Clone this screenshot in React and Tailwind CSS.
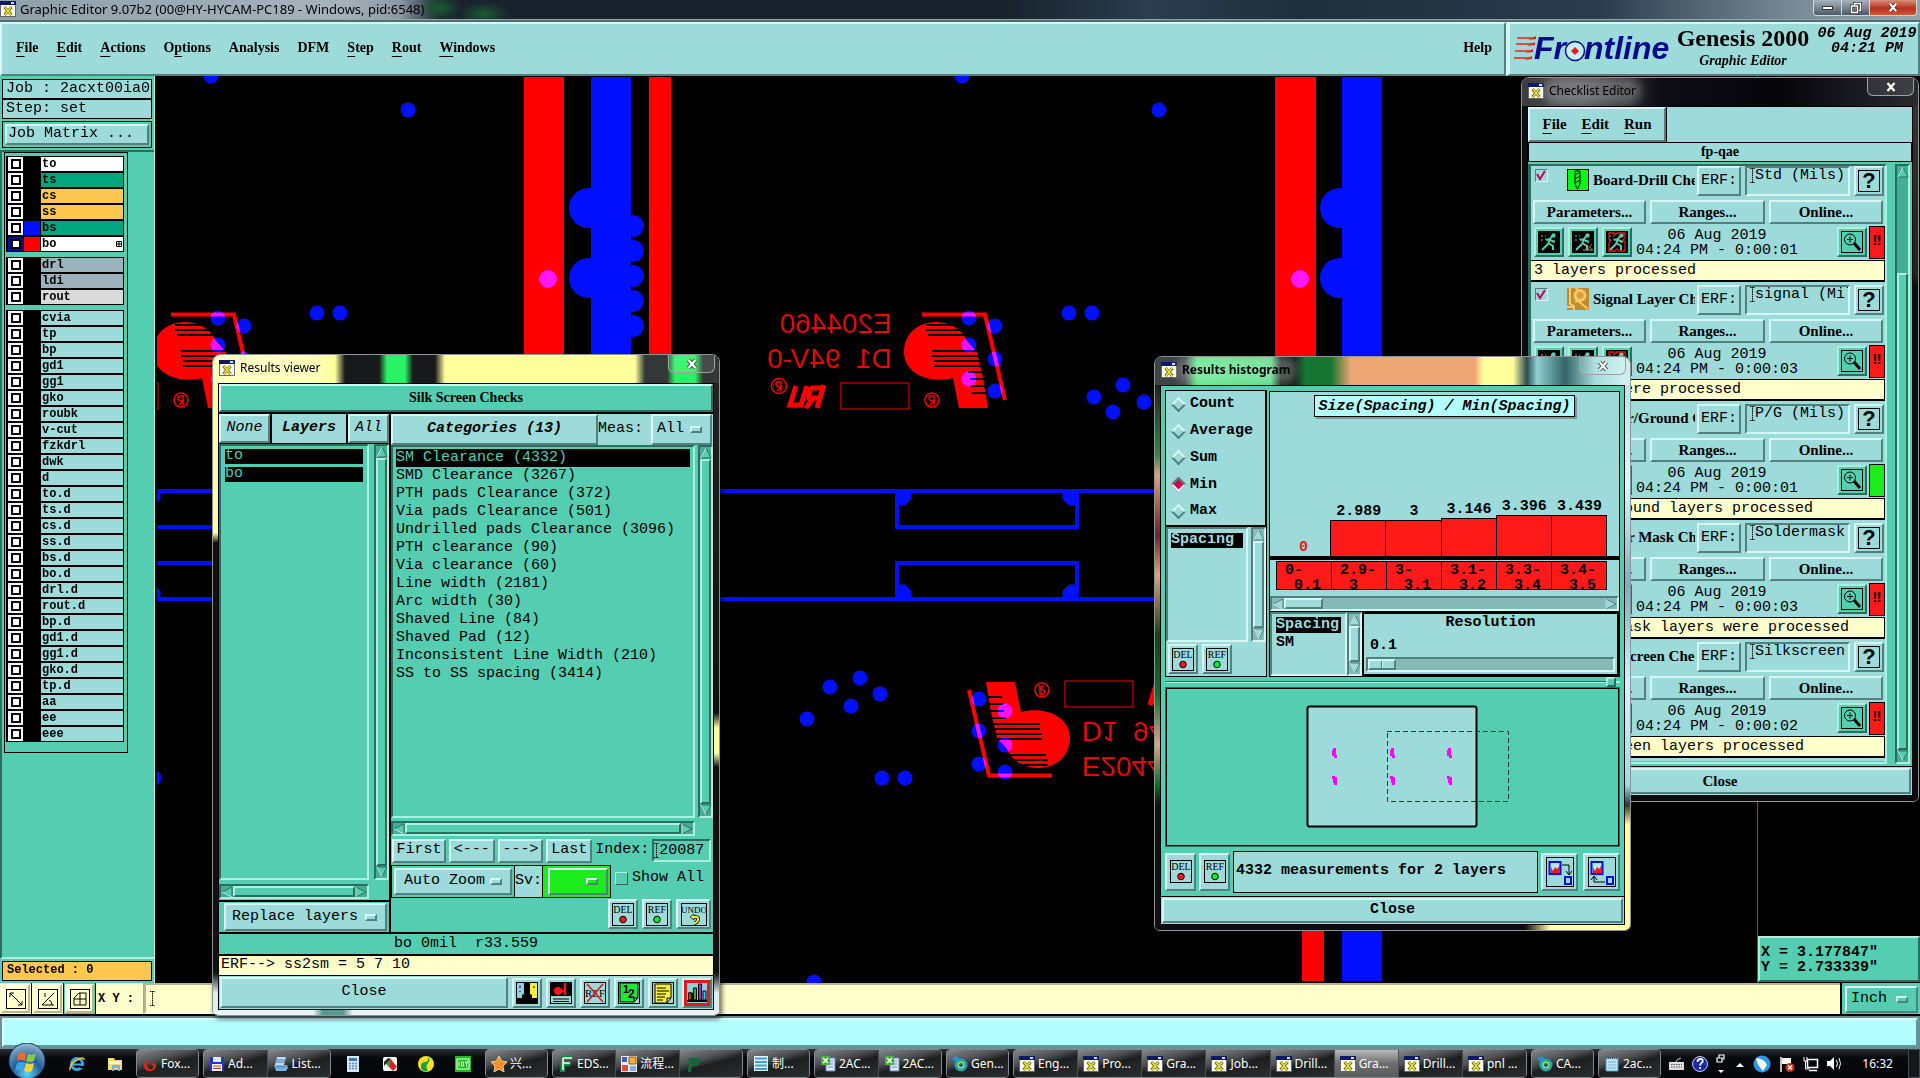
import React from "react";

const MONO = "font-['Liberation_Mono',monospace]";
const SERIF = "font-['Liberation_Serif',serif]";
const SANS = "font-['Noto_Sans','Noto_Sans_CJK_SC',sans-serif]";

/* Motif style bevels */
const RAISED = "border-2 border-t-[#d6f6f5] border-l-[#d6f6f5] border-b-[#51807f] border-r-[#51807f]";
const SUNKEN = "border-2 border-t-[#51807f] border-l-[#51807f] border-b-[#d6f6f5] border-r-[#d6f6f5]";
const G_RAISED = "border-2 border-t-[#a9f0de] border-l-[#a9f0de] border-b-[#2c6e5e] border-r-[#2c6e5e]";
const G_SUNKEN = "border-2 border-t-[#2c6e5e] border-l-[#2c6e5e] border-b-[#a9f0de] border-r-[#a9f0de]";

function Btn({ className = "", children, ...rest }) {
  return (
    <button type="button" className={`bg-[#9cdbda] flex items-center justify-center overflow-hidden whitespace-nowrap ${RAISED} ${className}`} {...rest}>
      {children}
    </button>
  );
}

function XIcon() {
  return (
    <svg className="size-4 shrink-0" viewBox="0 0 16 16">
      <rect x="0.5" y="0.5" width="15" height="15" fill="#fdfdf4" stroke="#666" />
      <rect x="0" y="0" width="16" height="4" fill="#10186b" />
      <rect x="11" y="1" width="3" height="2" fill="#ddd" />
      <path d="M4.500 6l7 8M11.500 6l-7 8" stroke="#6d6a10" strokeWidth="3" />
      <path d="M5 6l6 8M11 6l-6 8" stroke="#e8e23a" strokeWidth="1.500" />
    </svg>
  );
}

/* ---------- scroll bars ---------- */
function Arrow({ d, light }) {
  return (
    <svg className="size-3 shrink-0" viewBox="0 0 12 12">
      <path d={d} fill={light ? "#9cdbda" : "#55cdb0"} stroke={light ? "#51807f" : "#2c6e5e"} />
      <path d={d.split("L").slice(0, 2).join("L")} fill="none" stroke="#d6f6f5" />
    </svg>
  );
}
function VBar({ light = false, start = "0%", className = "" }) {
  return (
    <div className={`w-[15px] shrink-0 flex flex-col items-center ${light ? `bg-[#84b9b8] ${SUNKEN}` : `bg-[#44ad95] ${G_SUNKEN}`} ${className}`}>
      <Arrow light={light} d="M1 11L6 1L11 11Z" />
      <div className="shrink-0" style={{ height: start }} />
      <div className={`w-full flex-1 ${light ? `bg-[#9cdbda] ${RAISED}` : `bg-[#55cdb0] ${G_RAISED}`}`} />
      <Arrow light={light} d="M6 11L1 1L11 1Z" />
    </div>
  );
}
function HBar({ light = false, size = "100%", className = "" }) {
  return (
    <div className={`h-[15px] shrink-0 flex items-center ${light ? `bg-[#84b9b8] ${SUNKEN}` : `bg-[#44ad95] ${G_SUNKEN}`} ${className}`}>
      <Arrow light={light} d="M11 11L1 6L11 1Z" />
      <div className="flex-1 h-full flex">
        <div className={`h-full ${light ? `bg-[#9cdbda] ${RAISED}` : `bg-[#55cdb0] ${G_RAISED}`}`} style={{ width: size }} />
      </div>
      <Arrow light={light} d="M1 11L1 1L11 6Z" />
    </div>
  );
}

/* ---------- icon buttons ---------- */
function TagIcon({ label }) {
  const w = label === "UNDO" ? 26 : 22;
  return (
    <svg width={w} height="23" viewBox={`0 0 ${w} 23`} className="shrink-0">
      <rect x="0.500" y="0.500" width={w - 1} height="22" fill="none" stroke="#000" />
      <text x={w / 2} y="10" textAnchor="middle" fontFamily="Liberation Serif" fontWeight="normal" fontSize={label === "UNDO" ? 9 : 10}>{label}</text>
      {label === "UNDO" ? (
        <g fill="none">
          <path d="M11 14h4q3 0 2 3q-1 3-4 3" stroke="#000" strokeWidth="3.500" />
          <path d="M9 14l4-3v6z" fill="#f4ee3c" stroke="#000" strokeWidth="0.700" />
          <path d="M11 14h4q3 0 2 3q-1 3-4 3" stroke="#f4ee3c" strokeWidth="2" />
        </g>
      ) : (
        <circle cx={w / 2} cy="16.500" r="3.300" fill={label === "DEL" ? "#f01818" : "#18e828"} stroke="#000" />
      )}
    </svg>
  );
}
function TagBtn({ label }) {
  return (
    <Btn aria-label={label} className={label === "UNDO" ? "w-[35px] h-[30px] shrink-0" : "w-[30px] h-[30px] shrink-0"}>
      <TagIcon label={label} />
    </Btn>
  );
}

const FOOT_ICONS = [
  ["Contrast", <g key="a"><rect width="22" height="22" fill="#8fd0dc" /><rect x="12" width="10" height="22" fill="#f7f136" /><path d="M8 0h6v12l2 1v3h6v6H0v-6h6v-3l2-1z" fill="#000" /><path d="M4 4v2M4 9v1M18 4v2" stroke="#000" /></g>],
  ["Snapshot", <g key="b"><rect width="22" height="14" fill="#000" /><circle cx="8" cy="9" r="4" fill="#f01818" /><path d="M8 9h6M15 1v12" stroke="#f01818" strokeWidth="2.500" /><path d="M3 17h16M3 19.500h16" stroke="#000" strokeWidth="1.200" /></g>],
  ["Clear reference", <g key="c"><text x="11" y="15" textAnchor="middle" fontFamily="Liberation Serif" fontSize="11">REF</text><path d="M3 2L19 20M19 2L3 20" stroke="#d8232a" strokeWidth="1.800" /></g>],
  ["Page numbers", <g key="d"><path d="M2 1h18v15l-4 4H2z" fill="#22e53a" stroke="#000" /><path d="M16 20v-4h4" fill="none" stroke="#000" /><text x="5" y="11" fontFamily="Liberation Sans" fontWeight="bold" fontSize="11">1</text><text x="10" y="16" fontFamily="Liberation Sans" fontWeight="bold" fontSize="12">2</text></g>],
  ["Notes", <g key="e"><path d="M3 2h16v14l-4 5H3z" fill="#f7f136" stroke="#000" /><path d="M5 6h9M5 9h12M5 12h9M5 15h8M5 18h6M15 21v-5h4" stroke="#000" fill="none" /></g>],
  ["Histogram", <g key="f"><rect width="22" height="22" fill="#8fd0dc" /><path d="M2.500 18v-7h4v7zM7.500 18V6h3v12z" fill="#22b53a" stroke="#000" /><path d="M2.500 18v-7h3v7z" fill="#e22" stroke="#000" /><path d="M12.500 18V2h3v16z" fill="#b030c0" stroke="#000" /><path d="M17 18v-9h3v9z" fill="#40c8e8" stroke="#000" /><path d="M1 19h20" stroke="#000" strokeWidth="2" /></g>],
];

/* ---------- desktop window ---------- */
function Win({ title, className, bar, left, right, bottom, children }) {
  return (
    <section aria-label={title} className={`absolute flex flex-col rounded-t-lg rounded-b-md border border-[#8d9494] overflow-hidden ${className}`}>
      <header className={`h-7 shrink-0 flex items-center pl-[6px] pb-[2px] gap-[5px] ${bar}`}>
        <XIcon />
        <h2 className={`${SANS} text-xs text-black leading-4 rounded-full bg-white/25 shadow-[0_0_8px_6px_rgba(255,255,255,0.25)]`}>{title}</h2>
        <button type="button" aria-label={`Close ${title}`} className="ml-auto mr-1 self-start w-[47px] h-[18px] flex items-center justify-center rounded-b-md border border-t-0 border-[#9aa3a3] bg-white/10">
          <svg className="w-3 h-3" viewBox="0 0 12 12"><path d="M2.500 2l7 8M9.500 2l-7 8" stroke="#333" strokeWidth="4" /><path d="M2.500 2l7 8M9.500 2l-7 8" stroke="#fff" strokeWidth="2.400" /></svg>
        </button>
      </header>
      <div className="flex-1 min-h-0 flex">
        <div className={`w-[5px] shrink-0 ${left}`} />
        <div className="flex-1 min-w-0 border border-black flex flex-col">{children}</div>
        <div className={`w-[5px] shrink-0 ${right}`} />
      </div>
      <div className={`h-[5px] shrink-0 ${bottom}`} />
    </section>
  );
}

/* ---------- layer list ---------- */
const LAYERS = [
  [["to", "w"], ["ts", "g"], ["cs", "o"], ["ss", "o"], ["bs", "g", "blue"], ["bo", "w", "red"]],
  [["drl", "s"], ["ldi", "s"], ["rout", "l"]],
  "cvia tp bp gd1 gg1 gko roubk v-cut fzkdrl dwk d to.d ts.d cs.d ss.d bs.d bo.d drl.d rout.d bp.d gd1.d gg1.d gko.d tp.d aa ee eee".split(" ").map((n) => [n, "t"]),
];
const LAYER_BG = { w: "bg-white", g: "bg-[#00a67e]", o: "bg-[#ffc74d]", s: "bg-[#9cb3bd]", l: "bg-[#dadada]", t: "bg-[#9cdbda]" };
const SWATCH = { blue: "bg-[#0010ff]", red: "bg-[#ff0000]" };

function LayerRow({ name, tone, swatch }) {
  const active = name === "bo";
  return (
    <label className="h-4 pt-px pb-px pl-[2px] pr-px flex gap-px bg-black">
      <span className={`w-[15px] h-[14px] flex items-center justify-center ${active ? "bg-[#00108c]" : "bg-white"}`}>
        <input type="checkbox" aria-label={name} className="appearance-none block size-[10px] border-2 border-black bg-white" />
      </span>
      <span className={`w-4 ${swatch ? SWATCH[swatch] : ""}`} />
      <span className={`flex-1 flex items-center pl-px ${MONO} font-bold text-xs leading-[14px] text-black ${LAYER_BG[tone]}`}>
        {name}
        {active && (
          <svg className="ml-auto mr-px size-[6px]" viewBox="0 0 6 6"><path d="M.5.5h5v5h-5zM3 .5v5M.5 3h5" fill="none" stroke="#000" /></svg>
        )}
      </span>
    </label>
  );
}

function LeftPanel() {
  return (
    <aside className={`w-[155px] shrink-0 flex flex-col bg-[#55cdb0] border-r border-[#a9f0de] ${MONO} text-[15px]`}>
      <div className="mx-[2px] mt-[3px] border border-black bg-[#9cdbda]">
        <div className="h-5 leading-[18px] border-b-2 border-black pl-[3px] whitespace-nowrap">Job : 2acxt00ia0</div>
        <div className="h-[18px] leading-[18px] pl-[3px] whitespace-nowrap">Step: set</div>
      </div>
      <div className="mx-[2px] mt-[2px] h-[27px] p-[2px] border border-black flex">
        <Btn className="flex-1 justify-start pl-px">Job Matrix ...</Btn>
      </div>
      <div className="flex-1 mt-[2px] border-t-2 border-l-2 border-t-[#2c6e5e] border-l-[#2c6e5e] border-b-2 border-b-[#a9f0de] flex flex-col">
        <div className="w-[124px] ml-[2px] pt-[3px] pl-px pr-[3px] pb-[10px] border border-black flex flex-col gap-[5px]">
          {LAYERS.map((group, i) => (
            <div key={i}>
              {group.map(([n, t, s]) => <LayerRow key={n} name={n} tone={t} swatch={s} />)}
            </div>
          ))}
        </div>
      </div>
      <div className="m-[2px] h-5 pl-1 border border-black bg-[#ffc74d] font-bold text-[12px] leading-[17px]">Selected : 0</div>
    </aside>
  );
}

/* ---------- board drawing ---------- */
function LogoMark({ caption = true }) {
  return (
    <g>
      {caption && (
        <g fill="#e80808" stroke="none" fontFamily="Liberation Sans" fontSize="28">
          <text transform="translate(892 333) scale(-1 1)">E204460</text>
          <text transform="translate(892 368) scale(-1 1)" xmlSpace="preserve" style={{ whiteSpace: "pre" }}>D1  94V-0</text>
        </g>
      )}
      <rect x="841" y="383" width="68" height="26" fill="none" stroke="#f00" />
      <g fill="none" stroke="#f00" strokeWidth="1.500">
        <circle cx="932" cy="400" r="7" />
        <path d="M934 405v-9q-5-1-5 2t5 3l-4 4" />
        <circle cx="779" cy="386" r="7.500" />
        <path d="M781 391v-9q-5-1-5 2t5 3l-4 4" />
      </g>
      <g fill="none" stroke="#f00" strokeWidth="5">
        <path d="M796 386L790 405H801L807 386" />
        <path d="M824 385L817 408M822 388H812Q810 389 809 395T812 398H820M814 397L806 408" />
      </g>
      <path d="M922 314.500H985L1005 400" fill="none" stroke="#f00" strokeWidth="4" />
      <path d="M904 352C904 334 918 322 936 322C952 322 963 331 967 341L977 352L983 378L988 408H959L953 378C930 384 904 374 904 352Z" fill="#f00" />
      <path d="M926 325h34M926 330h40M928 335h40M932 351h50M932 356h50M934 361h50M934 366h52M968 372h22M970 379h22M971 386h22M972 393h20" stroke="#000" strokeWidth="2" />
      <g fill="#0010ff" style={{ mixBlendMode: "screen" }}>
        {[[969, 318], [995, 326], [969, 345], [995, 359], [969, 379], [995, 391]].map(([x, y]) => <circle key={`${x}-${y}`} cx={x} cy={y} r="7.500" />)}
      </g>
    </g>
  );
}

const DOTS = [[211, 76], [408, 110], [317, 313], [340, 313], [962, 76], [1159, 110], [1069, 313], [1092, 313], [1123, 385], [1094, 397], [1113, 412], [1144, 402], [807, 719], [830, 687], [860, 678], [851, 706], [880, 694], [882, 778], [905, 778], [814, 982], [154, 778]];

function Board() {
  return (
    <main className="flex-1 min-w-0 bg-black overflow-hidden">
      <svg className="block w-full h-full" role="img" aria-label="Board view">
        <svg x="2" width="100%" height="100%">
        <g transform="translate(-157 -76)">
          <g fill="#f00"><path d="M524 77h40v400h-40zM649 77h22v400h-22zM1275 77h41v400h-41zM1302 800h22v181h-22z" /></g>
          <g fill="#0010ff">
            <path d="M591 77h40v400h-40zM1342 77h40v904h-40z" />
            {[589, 1340].map((x) => <g key={x}><circle cx={x} cy="208" r="20" /><circle cx={x} cy="278" r="20" /></g>)}
            {[226, 251, 276, 301, 326].map((y) => <circle key={y} cx="633" cy={y} r="11" />)}
            {DOTS.map(([x, y]) => <circle key={`${x}-${y}`} cx={x} cy={y} r="7.500" />)}
          </g>
          <g fill="#ff18ff"><circle cx="548" cy="279" r="9" /><circle cx="1300" cy="279" r="9" /></g>
          <g stroke="#0010ff" strokeWidth="4" fill="none">
            <path d="M100 491H1400M100 599H1400" />
            {[0, 751].map((dx) => (
              <g key={dx} transform={`translate(${dx} 0)`}>
                <path d="M146 491V527H326V491M146 599V563H326V599" />
                <path d="M146 491h14v8l-6 6h-8zM326 491h-14v8l6 6h8zM146 599h14v-8l-6-6h-8zM326 599h-14v-8l6-6h8z" fill="#0010ff" strokeWidth="1" />
              </g>
            ))}
          </g>
          <LogoMark />
          <g transform="translate(-751 0)"><LogoMark caption={false} /></g>
          <g transform="rotate(180 987 545)"><LogoMark /></g>
        </g>
        </svg>
      </svg>
    </main>
  );
}

/* ---------- results viewer ---------- */
const CATEGORIES = ["SM Clearance (4332)", "SMD Clearance (3267)", "PTH pads Clearance (372)", "Via pads Clearance (501)", "Undrilled pads Clearance (3096)", "PTH clearance (90)", "Via clearance (60)", "Line width (2181)", "Arc width (30)", "Shaved Line (84)", "Shaved Pad (12)", "Inconsistent Line Width (210)", "SS to SS spacing (3414)"];

function Drop({ label, value, className = "", tone = "", pad = "pl-2" }) {
  return (
    <label className={`flex items-center pr-2 ${tone || "bg-[#9cdbda]"} ${RAISED} ${className}`}>
      <select aria-label={label} className={`appearance-none flex-1 min-w-0 bg-transparent text-black outline-none ${pad}`}>
        <option>{value}</option>
      </select>
      <span className={`w-3 h-[7px] shrink-0 ${RAISED}`} />
    </label>
  );
}

function IBeam() {
  return <svg className="w-[5px] h-[15px] shrink-0" viewBox="0 0 5 15"><path d="M0 .5h5M2.500 0v15M0 14.500h5" stroke="#000" strokeDasharray="1.500 0.700" /></svg>;
}

function ResultsViewer() {
  return (
    <Win
      title="Results viewer"
      className={`left-[212px] top-[354px] w-[508px] h-[662px] shadow-[2px_3px_5px_rgba(0,0,0,0.6)] ${MONO} text-[15px]`}
      bar="bg-[linear-gradient(90deg,#ffffc0_0px,#ffff9c_122px,#17191a_132px,#17191a_166px,#2bf264_174px,#2bf264_192px,#17191a_200px,#17191a_222px,#ffff9c_232px,#ffff9c_422px,#333738_432px,#333738_454px,#2bf264_462px,#2bf264_482px,#333738_490px)]"
      left="bg-[linear-gradient(180deg,#ffff9c_0px,#ffff9c_150px,#111_160px,#111_590px,#dcefee_610px)]"
      right="bg-[linear-gradient(180deg,#222_0px,#111_330px,#ffffa0_345px,#ffffa0_370px,#111_384px,#111_590px,#dcefee_610px)]"
      bottom="bg-[linear-gradient(90deg,#e4f6f5_0px,#e4f6f5_100px,#5e9490_110px,#5e9490_130px,#e4f6f5_140px)]"
    >
      <h3 className={`h-7 shrink-0 bg-[#55cdb0] flex items-center justify-center ${SERIF} font-bold text-sm border-2 border-t-[#d6f6f5] border-l-[#d6f6f5] border-b-[#2c6e5e] border-r-[#2c6e5e]`}>Silk Screen Checks</h3>
      <div className="flex-1 min-h-0 flex bg-[#55cdb0] border-t-2 border-black">
        <div className="w-[172px] shrink-0 flex flex-col border-r-2 border-black">
          <div className="h-[30px] flex border-b border-black italic bg-[#9cdbda]">
            <Btn className="w-[51px] italic">None</Btn>
            <div className="flex-1 border-x-2 border-black font-bold flex items-center justify-center">Layers</div>
            <Btn className="w-[41px] italic">All</Btn>
          </div>
          <div className="flex-1 min-h-0 flex justify-between">
            <ul role="listbox" aria-label="Layers" className={`w-[150px] pt-[3px] px-1 flex flex-col gap-[3px] ${G_SUNKEN}`}>
              {["to", "bo"].map((n) => (
                <li key={n} role="option" aria-selected="true" className="h-[15px] leading-[14px] bg-black text-[#55cdb0]">{n}</li>
              ))}
            </ul>
            <VBar />
          </div>
          <HBar className="w-[150px] mt-1 mb-px" />
          <div className="h-8 flex p-px border-t-2 border-black">
            <Drop label="Layer mode" value="Replace layers" className="flex-1 ml-1 mr-px" pad="pl-[6px]" />
          </div>
        </div>
        <div className="flex-1 min-w-0 flex flex-col">
          <div className="h-[31px] flex bg-[#9cdbda]">
            <h4 className={`w-[207px] flex items-center justify-center italic font-bold ${RAISED}`}>Categories (13)</h4>
            <span className="flex-1 flex items-center">Meas:</span>
            <Drop label="Measurement filter" value="All" className="w-[61px] mr-px" pad="pl-1" />
          </div>
          <div className="flex-1 min-h-0 flex justify-between">
            <ul role="listbox" aria-label="Categories" className={`w-[304px] pt-[2px] pl-[3px] pr-[3px] ${G_SUNKEN}`}>
              {CATEGORIES.map((c, i) => (
                <li key={c} role="option" aria-selected={i === 0} className={`h-[18px] leading-[18px] whitespace-pre ${i === 0 ? "bg-black text-[#55cdb0] " : "text-black"}`}>{c}</li>
              ))}
            </ul>
            <VBar />
          </div>
          <HBar className="w-[304px] mt-[3px]" />
          <div className="h-7 pt-px pl-px pr-[2px] flex items-center gap-[3px]">
            <Btn className="h-6 w-[54px]">First</Btn>
            <Btn className="h-6 w-[46px]">&lt;---</Btn>
            <Btn className="h-6 w-[46px]">---&gt;</Btn>
            <Btn className="h-6 w-[46px]">Last</Btn>
            <label htmlFor="idx" className="flex-1 whitespace-nowrap">Index:</label>
            <div className={`w-[59px] h-[23px] flex items-center ${G_SUNKEN}`}>
              <IBeam /><input id="idx" defaultValue="20087" className="w-full min-w-0 bg-transparent outline-none leading-4" />
            </div>
          </div>
          <div className="h-[34px] flex items-center">
            <div className="h-[33px] w-[124px] p-[2px] flex border border-black"><Drop label="Zoom mode" value="Auto Zoom" className="flex-1" /></div>
            <div className="h-[33px] w-[27px] flex items-center bg-[#9cdbda] border-y border-black">Sv:</div>
            <div className="h-[33px] w-[69px] p-[2px] pl-[5px] flex border border-black bg-[#1ceb1c]">
              <Drop label="Severity" value="" tone="bg-[#1ceb1c]" className="flex-1" />
            </div>
            <label className="flex-1 flex gap-1 pl-1 pb-[6px] items-center whitespace-nowrap">
              <input type="checkbox" className={`appearance-none size-[13px] border border-t-[#a9f0de] border-l-[#a9f0de] border-b-[#2c6e5e] border-r-[#2c6e5e]`} />
              Show All
            </label>
          </div>
          <div className="h-[34px] pr-[2px] flex justify-end items-start gap-1 pt-px">
            <TagBtn label="DEL" /><TagBtn label="REF" /><TagBtn label="UNDO" />
          </div>
        </div>
      </div>
      <p className="h-[22px] shrink-0 bg-[#55cdb0] border-t-2 border-black text-center whitespace-pre leading-[20px]">bo 0mil  r33.559</p>
      <p className="h-[22px] shrink-0 bg-[#ffffcc] border-y-2 border-b border-black pl-[2px] leading-[18px]">ERF--&gt; ss2sm = 5 7 10</p>
      <div className="h-[33px] shrink-0 bg-[#9cdbda] flex items-center gap-1 px-px">
        <Btn className="flex-1 h-[31px]">Close</Btn>
        {FOOT_ICONS.map(([n, g]) => (
          <Btn key={n} aria-label={n} className={`w-[30px] h-[30px] shrink-0 ${n === "Histogram" ? "outline-2 -outline-offset-4 outline-[#e81818]" : ""}`}>
            <svg width="22" height="22" viewBox="0 0 22 22" className="shrink-0">{g}<rect x="0.500" y="0.500" width="21" height="21" fill="none" stroke={n === "Histogram" ? "#d81c20" : "#000"} /></svg>
          </Btn>
        ))}
      </div>
    </Win>
  );
}

/* ---------- histogram ---------- */
const BARS = [
  { v: "0", h: 0, a: "0-", b: "0.1" },
  { v: "2.989", h: 36, a: "2.9-", b: "3" },
  { v: "3", h: 36, a: "3-", b: "3.1" },
  { v: "3.146", h: 38, a: "3.1-", b: "3.2" },
  { v: "3.396", h: 41, a: "3.3-", b: "3.4" },
  { v: "3.439", h: 41, a: "3.4-", b: "3.5" },
];

function Histogram() {
  return (
    <Win
      title="Results histogram"
      className={`left-[1154px] top-[356px] w-[477px] h-[575px] ${MONO} text-[15px] font-bold`}
      bar="bg-[linear-gradient(90deg,#3c4446_0px,#3c4446_30px,#55e484_42px,#55d880_116px,#15201a_126px,#15201a_140px,#167634_150px,#16762e_176px,#eea674_196px,#eea674_320px,#ffff9c_328px,#ffff9c_358px,#2a4a50_372px,#8fd0d2_382px,#356568_410px,#a5dcdc_440px,#cfeeee_470px)]"
      left="bg-[linear-gradient(180deg,#222_0px,#2c8a4a_70px,#e6a070_90px,#702030_150px,#e8a070_190px,#16401f_250px,#107030_310px,#e6a080_360px,#106a2c_400px,#111_420px)]"
      right="bg-[linear-gradient(180deg,#b0e8f0_0px,#d6fbff_100px,#7ab0b8_200px,#d0f6fa_300px,#9adce2_400px,#303838_420px,#ffffa0_440px)]"
      bottom="bg-[linear-gradient(90deg,#0a0a10_0px,#0a0a10_370px,#ffffa0_395px)]"
    >
      <div className="flex-1 min-h-0 flex flex-col bg-[#55cdb0] px-1 pt-1">
        <div className="h-[287px] shrink-0 flex gap-[2px]">
          <div className="w-[102px] shrink-0 flex flex-col bg-[#9cdbda] border border-black">
            <div role="radiogroup" aria-label="Statistic" className="h-[136px] flex flex-col border-b-2 border-r border-black pl-[7px]">
              {["Count", "Average", "Sum", "Min", "Max"].map((n) => (
                <label key={n} className="h-[27px] flex items-center gap-[6px]">
                  <input type="radio" name="stat" defaultChecked={n === "Min"} className="appearance-none rotate-45 size-[11px] border-2 border-t-[#d6f6f5] border-l-[#d6f6f5] border-b-[#51807f] border-r-[#51807f] checked:border-t-[#51807f] checked:border-l-[#51807f] checked:border-b-[#d6f6f5] checked:border-r-[#d6f6f5] checked:bg-[#d0004c]" />
                  {n}
                </label>
              ))}
            </div>
            <div className="h-[115px] flex justify-between">
              <ul role="listbox" aria-label="Measured value" className={`w-[82px] pt-[4px] px-[3px] ${SUNKEN}`}>
                <li role="option" aria-selected="true" className="h-[15px] leading-[14px] w-[72px] bg-black text-[#9cdbda]">Spacing</li>
              </ul>
              <VBar light />
            </div>
            <div className="flex-1 flex items-center gap-1 pl-[2px]"><TagBtn label="DEL" /><TagBtn label="REF" /></div>
          </div>
          <div className="flex-1 min-w-0 flex flex-col bg-[#9cdbda] border border-black mt-px">
            <div className="h-[204px] shrink-0 flex flex-col">
              <h3 className="self-center mt-[3px] px-[3px] h-[22px] leading-[22px] italic bg-[#b3ffff] border border-black shadow-[2px_2px_0_#7d9a9a]">Size(Spacing) / Min(Spacing)</h3>
              <div className="flex-1 flex items-end border-b-4 border-black pl-[6px] pr-3">
                {BARS.map((b, i) => (
                  <div key={b.a} className="flex-1 flex flex-col items-stretch">
                    <span className={`text-center leading-4 ${i === 0 ? "text-[#f01818]" : "text-black"}`}>{b.v}</span>
                    <div className={b.h ? "bg-[#ff1a1a] border border-b-0 border-black -ml-px" : ""} style={{ height: b.h }} />
                  </div>
                ))}
              </div>
              <div className="h-[29px] mt-px flex pl-[6px] pr-3 mb-[6px]">
                {BARS.map((b, i) => (
                  <div key={b.a} className={`flex-1 bg-[#ff1a1a] border border-black overflow-hidden leading-[15px] pl-2 pt-px whitespace-pre ${i ? "-ml-px" : ""}`}>
                    {b.a}<br />{" " + b.b}
                  </div>
                ))}
              </div>
            </div>
            <HBar light size="12%" />
            <div className="flex-1 min-h-0 flex border-t border-black">
              <ul role="listbox" aria-label="Axis" className={`w-[77px] pt-[3px] pl-1 pr-1 ${SUNKEN}`}>
                <li role="option" aria-selected="true" className="h-[16px] leading-[15px] bg-black text-[#9cdbda]">Spacing</li>
                <li role="option" aria-selected="false" className="h-[18px] leading-[20px]">SM</li>
              </ul>
              <VBar light />
              <label className="flex-1 flex flex-col px-[2px] pb-[2px] border-2 border-black justify-between">
                <span className="text-center leading-[18px]">Resolution</span>
                <span className="pl-1 pt-[3px] leading-4">0.1</span>
                <input type="range" min="0" max="10" defaultValue="0" className={`appearance-none w-full h-[15px] bg-[#84b9b8] ${SUNKEN} [&::-webkit-slider-thumb]:appearance-none [&::-webkit-slider-thumb]:w-7 [&::-webkit-slider-thumb]:h-[11px] [&::-webkit-slider-thumb]:bg-[linear-gradient(90deg,#9cdbda_11px,#51807f_11px,#51807f_12px,#d6f6f5_12px,#d6f6f5_13px,#9cdbda_13px)] [&::-webkit-slider-thumb]:border-2 [&::-webkit-slider-thumb]:border-t-[#d6f6f5] [&::-webkit-slider-thumb]:border-l-[#d6f6f5] [&::-webkit-slider-thumb]:border-b-[#51807f] [&::-webkit-slider-thumb]:border-r-[#51807f]`} />
              </label>
            </div>
          </div>
        </div>
        <div className="h-[10px] shrink-0 flex items-center">
          <div className="flex-1 h-[2px] bg-[#a9f0de] border-t border-[#2c6e5e]" />
          <span className={`size-[10px] bg-[#55cdb0] ${G_RAISED}`} />
          <div className="w-1 h-[2px] bg-[#a9f0de]" />
        </div>
        <div className="flex-1 min-h-0 flex items-center justify-center border-2 border-[#2c6e5e] outline-1 -outline-offset-2 outline-black">
          <svg width="204" height="124" viewBox="1305 706 204 124" className="ml-7" role="img" aria-label="Measurement map">
            <rect x="1307.500" y="707.500" width="169" height="120" rx="2" fill="#9cdbda" stroke="#000" strokeWidth="2" />
            <path d="M1387 732.500H1508.500V802.500H1387.500V732.500" fill="none" stroke="#333" strokeDasharray="5 3" />
            <g fill="#f0f">
              {[1334, 1392, 1449].map((x) => <g key={x}><path d={`M${x - 1} 749h3v7h1v3h-3v-2h-2v-6h1z`} /><path d={`M${x - 2} 777h3v1h2v8h-3v-2h-1v-4h-1z`} /></g>)}
            </g>
          </svg>
        </div>
        <div className="h-[49px] shrink-0 flex items-center gap-[3px]">
          <Btn aria-label="Delete" className="w-[31px] h-[38px] shrink-0"><TagIcon label="DEL" /></Btn>
          <Btn aria-label="Reference" className="w-[31px] h-[38px] shrink-0"><TagIcon label="REF" /></Btn>
          <p className="flex-1 h-[42px] px-[2px] flex items-center bg-[#9cdbda] border border-black whitespace-nowrap">4332 measurements for 2 layers</p>
          <Btn aria-label="Copy to layer" className="w-[37px] h-[38px] shrink-0">
            <svg width="28" height="30" viewBox="0 0 28 30"><rect x=".5" y=".5" width="27" height="29" fill="none" stroke="#000" /><rect x="3.500" y="5" width="11" height="12" fill="#b8e8f8" stroke="#0010e0" strokeWidth="2" /><path d="M5 16V10l2 4 2-4 2 2 3-4v8z" fill="#f01818" /><rect x="19" y="20" width="6" height="7" fill="none" stroke="#0010e0" strokeWidth="2" /><path d="M16 8h7v9M20 14l3 4 3-4" fill="none" stroke="#000" /></svg>
          </Btn>
          <Btn aria-label="Copy from layer" className="w-[37px] h-[38px] shrink-0 ml-[2px]">
            <svg width="28" height="30" viewBox="0 0 28 30"><rect x=".5" y=".5" width="27" height="29" fill="none" stroke="#000" /><rect x="3.500" y="5" width="11" height="12" fill="#b8e8f8" stroke="#0010e0" strokeWidth="2" /><path d="M5 16V10l2 4 2-4 2 2 3-4v8z" fill="#f01818" /><rect x="19" y="20" width="6" height="7" fill="none" stroke="#0010e0" strokeWidth="2" /><path d="M17 25H6v-5M3 23l3-4 3 4" fill="none" stroke="#000" /></svg>
          </Btn>
        </div>
      </div>
      <div className="h-7 shrink-0 p-px flex bg-[#9cdbda] border-t border-black"><Btn className="flex-1 font-bold">Close</Btn></div>
    </Win>
  );
}

/* ---------- checklist ---------- */
const CHECKS = [
  { n: "Board-Drill Checks", e: "Std (Mils)", t: "0:00:01", m: "3 layers processed", ok: false, icon: "drill" },
  { n: "Signal Layer Checks", e: "signal (Mils)", t: "0:00:03", m: "6 layers were processed", ok: false, icon: "signal" },
  { n: "Power/Ground Checks", e: "P/G (Mils)", t: "0:00:01", m: "2 power/ground layers processed", ok: true, icon: "signal" },
  { n: "Solder Mask Checks", e: "Soldermask", t: "0:00:03", m: "2 solder mask layers were processed", ok: false, icon: "drill" },
  { n: "Silk Screen Checks", e: "Silkscreen", t: "0:00:02", m: "2 silk screen layers processed", ok: false, icon: "drill" },
];

function RunIcon({ kind }) {
  return (
    <svg width="22" height="22" viewBox="0 0 22 22" className="shrink-0 bg-black">
      <g fill="none" stroke="#55cdb0" strokeWidth="2">
        <path d="M15 4l-3 4-2 5M10 13l-6 6M10 12l5 3v4M12 8l-4 1M12 9l5 2" />
        <path d="M14 3h3v3h-3z" fill="#55cdb0" strokeWidth="1" />
        <path d="M3 5h2M7 5h1M3 9h2M7 8h1" strokeWidth="1" />
      </g>
      {kind === 1 && <path d="M15 14l5 4M20 13l-4 5" stroke="#e8303a" />}
      {kind === 1 && <path d="M11 19h10" stroke="#55cdb0" />}
      {kind === 2 && <path d="M3 2h5l1 2 2-2h8v5l-2 2 2 2v9h-6l-2-2-2 2H3v-8l2-2-2-2z" fill="none" stroke="#e81818" strokeWidth="1.300" />}
    </svg>
  );
}

function CheckItem({ c }) {
  return (
    <li className="h-[119px] shrink-0 flex flex-col bg-[#9cdbda]">
      <div className="h-[34px] flex items-start">
        <span className="relative mt-[3px] ml-1 size-[13px] shrink-0">
          <input type="checkbox" aria-label={c.n} defaultChecked className="appearance-none block size-[13px] border border-t-[#51807f] border-l-[#51807f] border-b-[#d6f6f5] border-r-[#d6f6f5]" />
          <svg className="absolute inset-0 pointer-events-none" width="13" height="13" viewBox="0 0 13 13"><path d="M2 5l3 5 5-8" fill="none" stroke="#c00858" strokeWidth="2" /></svg>
        </span>
        <svg width="22" height="22" viewBox="0 0 22 22" className="ml-[19px] mt-[3px] shrink-0">
          {c.icon === "drill" ? (
            <g><rect x=".5" y=".5" width="21" height="21" fill="#00ff10" stroke="#000" /><path d="M8 2h5v13l-2.500 5L8 15zM8 6l5-3M8 10l5-3M8 14l5-3" fill="none" stroke="#000" /></g>
          ) : (
            <g><rect width="22" height="22" fill="#bd8a35" /><path d="M8 0l5 3M3 0v16l4 2v4M0 19h6M8 14l4-2M11 13l10 8" stroke="#fbc860" strokeWidth="2" fill="none" /><circle cx="13" cy="7.500" r="5" fill="#d8a040" stroke="#fbc860" strokeWidth="3" /></g>
          )}
        </svg>
        <span className={`flex-1 min-w-0 ml-1 mt-1 overflow-hidden whitespace-nowrap ${SERIF} font-bold text-[15px] leading-5`}>{c.n}</span>
        <Btn className="w-11 h-[30px] ml-[2px] px-px">ERF:</Btn>
        <div className={`w-[105px] h-[30px] ml-1 pl-[3px] flex items-start ${SUNKEN}`}>
          <IBeam /><input aria-label={`${c.n} ERF`} defaultValue={c.e} className="w-full min-w-0 bg-transparent outline-none leading-4 h-4" />
        </div>
        <Btn aria-label={`${c.n} help`} className="w-[30px] h-[30px] ml-1 mr-px"><span className="w-[22px] h-[22px] border border-black flex items-center justify-center font-['Liberation_Sans',sans-serif] font-bold text-[22px] leading-[20px]">?</span></Btn>
      </div>
      <div className={`h-6 px-[2px] flex gap-1 ${SERIF} font-bold text-[15px]`}>
        <Btn className="w-[113px]">Parameters...</Btn>
        <Btn className="flex-1">Ranges...</Btn>
        <Btn className="w-[114px]">Online...</Btn>
      </div>
      <div className="h-[36px] pt-[2px] pl-[3px] flex items-start">
        <div className="flex gap-1 pt-px">
          {[0, 1, 2].map((k) => <button type="button" key={k} aria-label={`Run mode ${k + 1}`} className={`size-[30px] bg-[#55cdb0] flex items-center justify-center ${G_RAISED}`}><RunIcon kind={k} /></button>)}
        </div>
        <p className="w-[170px] text-center leading-[15px] pt-[2px] shrink-0">06 Aug 2019<br /><span className="whitespace-nowrap">04:24 PM - {c.t}</span></p>
        <button type="button" aria-label="Zoom to results" className={`ml-auto mt-px size-[30px] bg-[#55cdb0] flex items-center justify-center ${G_RAISED}`}>
          <svg width="22" height="22" viewBox="0 0 22 22"><rect x=".5" y=".5" width="21" height="21" fill="none" stroke="#000" /><circle cx="9" cy="8.500" r="5.500" fill="none" stroke="#000" /><path d="M6 8.500h6M9 5.500v6" stroke="#000" /><path d="M13 12l6 7" stroke="#000" strokeWidth="3" /></svg>
        </button>
        <span className={`ml-[2px] w-4 h-[33px] border border-black flex items-center justify-center font-bold ${c.ok ? "bg-[#1ceb1c]" : "bg-[#ff1a1a]"}`}>{c.ok ? "" : "‼"}</span>
      </div>
      <p className="h-[22px] bg-[#ffffcc] border-t border-b-2 border-r border-black pl-[3px] leading-[19px] whitespace-pre overflow-hidden">{c.m}</p>
    </li>
  );
}

function Mnemonic({ text, at = 0 }) {
  return <>{text.slice(0, at)}<span className="underline underline-offset-4 decoration-1">{text[at]}</span>{text.slice(at + 1)}</>;
}

function Checklist() {
  return (
    <Win
      title="Checklist Editor"
      className={`right-px top-[77px] w-[398px] h-[725px] ${MONO} text-[15px]`}
      bar="bg-[linear-gradient(90deg,#3a3d3e_0px,#4a4d4e_60px,#0c0c12_140px,#05050a_260px,#2a2b30_398px)]"
      left="bg-[#0c0c10]"
      right="bg-[linear-gradient(180deg,#333_0px,#222_170px,#0c0c10_180px)]"
      bottom="bg-[#0c0c10]"
    >
      <div className="h-[35px] shrink-0 flex bg-[#9cdbda]">
        <nav className={`w-[138px] flex items-center justify-around px-[5px] pb-px ${SERIF} font-bold text-[15px] ${RAISED} outline-1 outline-black`}>
          {["File", "Edit", "Run"].map((m) => <button type="button" key={m}><Mnemonic text={m} /></button>)}
        </nav>
      </div>
      <h3 className={`h-5 shrink-0 bg-[#9cdbda] border border-black text-center ${SERIF} font-bold text-sm leading-[18px]`}>fp-qae</h3>
      <div className="flex-1 min-h-0 flex justify-between bg-[#55cdb0] pt-[2px] pr-[2px] pb-[2px]">
        <ul className="w-[359px] overflow-hidden border-l-[3px] border-t-2 border-t-[#2c6e5e] border-l-[#2c6e5e] border-r-2 border-b-2 border-r-[#a9f0de] border-b-[#a9f0de]">
          {CHECKS.map((c) => <CheckItem key={c.n} c={c} />)}
        </ul>
        <VBar start="95px" />
      </div>
      <div className="h-[29px] shrink-0 bg-[#9cdbda] p-px flex border-t border-black"><Btn className={`flex-1 ${SERIF} font-bold text-[15px]`}>Close</Btn></div>
    </Win>
  );
}

/* ---------- taskbar ---------- */
const IC = {
  fox: <path d="M13 1L8 4q-6 0-6 6 0 5 6 5t6-5q0-3-3-3l-4 1q4 0 4 3t-3 2-3-4q0-4 8-8z" fill="#d8281a" />,
  save: <g><rect x="1" y="1" width="14" height="14" fill="#2038c8" /><rect x="4" y="1" width="8" height="5" fill="#dfe6f5" /><rect x="3" y="8" width="10" height="7" fill="#fff" /><path d="M4 10h8M4 12.500h8" stroke="#d03030" /></g>,
  list: <g><path d="M4 1h9l-2 8H2z" fill="#b6dcf6" /><path d="M1 9h13l1 3-2 3H3z" fill="#7ab0dc" /><path d="M3 4h9M3 6h9M3 11h10" stroke="#4a80b0" /></g>,
  star: <path d="M8 0l2.500 5 5.500 1-4 4 1 6-5-3-5 3 1-6-4-4 5.500-1z" fill="#f09030" stroke="#fbd080" />,
  f: <g><path d="M3 0h12l-1 4H7v2h6l-1 4H7v6H2z" fill="#138a44" /><path d="M5 2h9M5 2v12M5 7h7" stroke="#fff" strokeWidth="1.500" /></g>,
  flow: <g><rect width="16" height="16" fill="#eee" /><path d="M1 1h5v5H1z" fill="#3560c0" /><path d="M8 1h7v7H8z" fill="#e8b830" stroke="#a05010" /><path d="M1 9h6v6H1z" fill="#e05030" /><path d="M9 10h6v5H9z" fill="#88a8e0" /></g>,
  p: <path d="M4 2h8q4 0 3 4t-6 4H7l-1 6H3zM8 5l-1 3h3q1-3-2-3z" fill="#126a3a" fillRule="evenodd" />,
  doc: <g><rect width="14" height="15" x="1" fill="#e8f4fc" /><path d="M2 2.500h12M2 6h12M2 9.500h12M2 13h12" stroke="#3aa0d8" strokeWidth="2" /></g>,
  xls: <g><path d="M6 2h9v13H6z" fill="#dce8f4" stroke="#6088b0" /><path d="M8 5h5M8 8h5M8 11h5" stroke="#6890b8" /><rect x="1" y="0" width="9" height="9" fill="#48b038" /><path d="M3 2l5 5M8 2L3 7" stroke="#fff" strokeWidth="1.500" /></g>,
  gear: <g><circle cx="9" cy="9" r="5" fill="#a8e048" stroke="#20a8a8" strokeWidth="3" /><circle cx="9" cy="9" r="2" fill="#1858a0" /><path d="M0 2l5-2 3 3-5 3z" fill="#2890d0" /></g>,
  note: <g><path d="M2 2h12v13H2z" fill="#b8e4f4" stroke="#5a98b8" /><path d="M2 2h12" stroke="#446" strokeDasharray="1 1" strokeWidth="2" /><path d="M4 6h8M4 9h8M4 12h8" stroke="#78b8d0" /></g>,
  calc: <g><rect x="2" y="0" width="12" height="16" fill="#d4e8f8" /><rect x="4" y="2" width="8" height="3" fill="#3a78c0" /><path d="M4 7.500h8M4 10h8M4 12.500h8" stroke="#5a90c8" strokeWidth="1.500" strokeDasharray="2 1" /></g>,
  fan: <g><rect x="1" y="1" width="14" height="14" fill="#fff" rx="2" /><path d="M2 6l6-4v10z" fill="#20a040" /><path d="M8 2l7 9-4 4-3-3z" fill="#e02020" /><path d="M2 6l4-4 2 1-6 7z" fill="#222" /></g>,
  ball: <g><circle cx="8" cy="8" r="8" fill="#f8e020" /><path d="M10 1q3 3 0 6t0 8q-7 1-7-4t4-5 3-5z" fill="#18a048" /></g>,
  iqiyi: <g><rect width="16" height="16" y="0" fill="#18c018" /><rect x="2" y="3" width="12" height="10" fill="none" stroke="#fff" /><path d="M4 5.500v5M6.500 6h2v4h-2zM10.500 5l1 3 1-3M11.500 8v3" stroke="#fff" fill="none" /></g>,
  ie: <g><circle cx="8" cy="8" r="5.500" fill="none" stroke="#3aa8e8" strokeWidth="3" /><path d="M4 8.500h9" stroke="#3aa8e8" strokeWidth="2" /><path d="M11 10h5v2h-5z" fill="#07090c" /><path d="M1 14Q0 9 8 4q7-4 7 0" fill="none" stroke="#f0c030" strokeWidth="1.500" /></g>,
  folder: <g><path d="M1 2h6l1 2h7v10H1z" fill="#f4d878" /><path d="M2 5h12v3H2z" fill="#fff6c8" /><path d="M5 9h8v6h-2v-3H7v3H5z" fill="#68b8e8" /></g>,
};
function Ic({ k }) {
  if (k === "x") return <XIcon />;
  return <svg className="size-4 shrink-0" viewBox="0 0 16 16">{IC[k]}</svg>;
}

const GROUP_W = { 1: "w-[63px]", 2: "w-32", 3: "w-[191px]", 8: "w-[514px]" };

function TaskGroup({ items }) {
  return (
    <div className={`h-full flex rounded-sm border border-[#85888c] overflow-hidden shrink-0 ${GROUP_W[items.length]}`}>
      {items.map(([k, t, on], i) => (
        <button type="button" key={i} className={`flex-1 min-w-0 h-full flex items-center gap-[3px] pl-[5px] text-white text-[12px] whitespace-nowrap ${i ? "border-l border-[#4a4d50]" : ""} ${on ? "bg-[linear-gradient(180deg,#b8babc,#6c6e70_50%,#585a5c)]" : "bg-[linear-gradient(165deg,#86898c_0%,#4c4f52_35%,#1c1e20_52%,#2c2e30_100%)]"}`}>
          <Ic k={k} />{t}
        </button>
      ))}
    </div>
  );
}

function Taskbar() {
  return (
    <footer className={`relative h-[29px] shrink-0 bg-[linear-gradient(180deg,#2a3036,#07090c_30%,#05070a)] flex items-center gap-1 ${SANS}`}>
      <button type="button" aria-label="Start" className="absolute left-2 -top-1.5">
        <svg width="38" height="38" viewBox="0 0 38 38">
          <defs><radialGradient id="orb" cx="50%" cy="85%" r="80%"><stop offset="0" stopColor="#58d8f8" /><stop offset=".5" stopColor="#1f5f98" /><stop offset="1" stopColor="#8ab0cc" /></radialGradient></defs>
          <circle cx="19" cy="18" r="18" fill="url(#orb)" stroke="#1a3850" />
          <path d="M10 11q4-3 8-1l-1 8q-4-2-8 0z" fill="#f0682a" />
          <path d="M20 11q4 2 8-1l-2 8q-4 2-8 0z" fill="#88c840" />
          <path d="M9 20q4-2 8 0l-2 8q-4-2-8 0z" fill="#3aa0e8" />
          <path d="M18 20q4 2 8 0l-2 8q-4 2-8 0z" fill="#f8d040" />
        </svg>
      </button>
      <div className="w-[132px] shrink-0 flex justify-end gap-[22px] pr-[9px]"><Ic k="ie" /><Ic k="folder" /></div>
      <TaskGroup items={[["fox", "Fox..."]]} />
      <TaskGroup items={[["save", "Ad..."], ["list", "List..."]]} />
      <div className="w-[146px] shrink-0 flex justify-around"><Ic k="calc" /><Ic k="fan" /><Ic k="ball" /><Ic k="iqiyi" /></div>
      <TaskGroup items={[["star", "兴..."]]} />
      <TaskGroup items={[["f", "EDS..."], ["flow", "流程..."], ["p", ""]]} />
      <TaskGroup items={[["doc", "制..."]]} />
      <TaskGroup items={[["xls", "2AC..."], ["xls", "2AC..."]]} />
      <TaskGroup items={[["gear", "Gen..."]]} />
      <TaskGroup items={[["x", "Eng..."], ["x", "Pro..."], ["x", "Gra..."], ["x", "Job..."], ["x", "Drill..."], ["x", "Gra...", true], ["x", "Drill..."], ["x", "pnl ..."]]} />
      <TaskGroup items={[["gear", "CA..."]]} />
      <TaskGroup items={[["note", "2ac..."]]} />
      <div className="ml-auto h-full flex items-center gap-[7px]">
        <svg width="17" height="16" viewBox="0 0 17 16"><rect x="1" y="6" width="15" height="8" fill="#ddd" /><path d="M3 8.500h11M3 11h11" stroke="#555" strokeDasharray="1.500 1" /><path d="M8 6q0-3 5-4" stroke="#ccc" fill="none" /></svg>
        <svg width="16" height="16" viewBox="0 0 16 16"><circle cx="8" cy="8" r="7.500" fill="#1828b0" stroke="#c8d0f0" /><path d="M5.500 6q0-3 3-3t2 3q-2 1-2.500 3.500M8 11v2" stroke="#fff" strokeWidth="1.800" fill="none" /></svg>
        <svg width="12" height="22" viewBox="0 0 12 22"><path d="M2 5h5v4H2zM4 5V2h5v4H7" fill="none" stroke="#fff" strokeWidth="1.200" /><path d="M3 17h6l-3 3z" fill="#fff" /></svg>
        <svg width="12" height="8" viewBox="0 0 12 8"><path d="M2 7l4-4 4 4z" fill="#fff" /></svg>
        <svg width="18" height="18" viewBox="0 0 18 18"><circle cx="9" cy="9" r="8.500" fill="#2898e8" /><path d="M3 3q9 1 11 7l-4 6Q4 10 3 3z" fill="#fff" /></svg>
        <svg width="17" height="18" viewBox="0 0 17 18"><path d="M3 2v15" stroke="#fff" strokeWidth="1.500" /><path d="M4 3h9v6H4z" fill="#fff" /><circle cx="12" cy="12.500" r="4.500" fill="#d82818" /><path d="M10 10.500l4 4M14 10.500l-4 4" stroke="#fff" strokeWidth="1.300" /></svg>
        <svg width="17" height="17" viewBox="0 0 17 17"><path d="M5.500 4.500h10v8h-10zM7 15.500h8" fill="none" stroke="#fff" strokeWidth="1.500" /><path d="M2 2v4h3V2M3.500 6v8h4" fill="none" stroke="#fff" /></svg>
        <svg width="17" height="17" viewBox="0 0 17 17"><path d="M1 6h3l4-4v13l-4-4H1z" fill="#fff" /><path d="M10.500 5q2 3.500 0 7M13 3q3 5.500 0 11" stroke="#fff" fill="none" /></svg>
        <time className="ml-3 mr-2 text-white text-xs">16:32</time>
        <button type="button" aria-label="Show desktop" className="w-3 h-full border border-[#44484c] bg-[#15181b]" />
      </div>
    </footer>
  );
}

/* ---------- main frame ---------- */
const MENU = [["File", 0], ["Edit", 0], ["Actions", 0], ["Options", 1], ["Analysis", -1], ["DFM", -1], ["Step", 0], ["Rout", 0], ["Windows", 0]];

function Frontline() {
  return (
    <svg width="156" height="36" viewBox="0 0 156 36" role="img" aria-label="Frontline" className="shrink-0">
      <g fill="#f02018" stroke="#f02018"><path d="M3 7h19M2 13h19M1 20h18M0 27h18" strokeWidth="1.500" /><path d="M14 9l8-4v3zM13 15l8-4v3zM11 22l8-4v3zM10 29l8-4v3z" stroke="none" /></g>
      <g fill="#0a0a8c" fontFamily="Liberation Sans" fontSize="32" fontWeight="bold" fontStyle="italic">
        <text x="20" y="28">Fr</text>
        <text x="70" y="28">ntline</text>
      </g>
      <circle cx="61" cy="20" r="9.500" fill="#c4f0f0" stroke="#0a0a8c" strokeWidth="1.500" />
      <path d="M61 16l4 4-4 4-4-4z" fill="#f01818" />
    </svg>
  );
}

function ToolBtn({ label, on, children }) {
  return (
    <div className={`w-8 p-px border-r border-black flex ${on ? "bg-[#55cdb0]" : "bg-[#ffffcc]"}`}>
      <button type="button" aria-label={label} className="flex-1 flex items-center justify-center bg-[#ffffcc] border-2 border-t-[#ffffe8] border-l-[#ffffe8] border-b-[#b8b48c] border-r-[#b8b48c]">
        <svg width="20" height="20" viewBox="0 0 20 20" fill="none" stroke="#000"><rect x=".5" y=".5" width="19" height="19" />{children}</svg>
      </button>
    </div>
  );
}

export default function App() {
  return (
    <div className="relative h-screen w-full overflow-hidden flex flex-col bg-black text-black select-none">
      <header className={`h-5 shrink-0 flex items-center pb-[2px] gap-1 text-[13px] border-b border-[#9aa4a8] bg-[radial-gradient(ellipse_22px_14px_at_440px_8px,#1d5a34,transparent),radial-gradient(ellipse_26px_12px_at_484px_14px,#1d5a34,transparent),linear-gradient(90deg,#8fa0aa_0px,#a7b3bc_340px,#8d99a2_400px,#17222c_440px,#17222c_1000px,#2c3d4d_1150px,#1f2e3c_1300px,#2c3c4c_1600px,#7b8c99_1800px,#94a4ae_1920px)] ${SANS}`}>
        <XIcon />
        <h1 className="leading-4">Graphic Editor 9.07b2 (00@HY-HYCAM-PC189 - Windows, pid:6548)</h1>
        <div className="ml-auto mr-[3px] self-start h-4 flex rounded-b border border-t-0 border-[#d0d8dc] overflow-hidden">
          <button type="button" aria-label="Minimize" className="w-7 flex items-center justify-center bg-[linear-gradient(180deg,#a8b4bc,#4c5a66)] border-r border-[#d0d8dc]"><span className="w-[11px] h-1 bg-white border border-[#333]" /></button>
          <button type="button" aria-label="Restore" className="w-7 flex items-center justify-center bg-[linear-gradient(180deg,#a8b4bc,#4c5a66)] border-r border-[#d0d8dc]"><svg width="12" height="12" viewBox="0 0 12 12" fill="none"><path d="M4.500 3V1.500h6v7H9M1.500 4h6v6.500h-6z" stroke="#333" strokeWidth="3" /><path d="M4.500 3V1.500h6v7H9M1.500 4h6v6.500h-6z" stroke="#fff" strokeWidth="1.500" /></svg></button>
          <button type="button" aria-label="Close" className="w-[46px] flex items-center justify-center bg-[linear-gradient(180deg,#d8907c,#b8301c_55%,#d05838)]"><svg width="12" height="11" viewBox="0 0 12 12"><path d="M2.500 2l7 8M9.500 2l-7 8" stroke="#422" strokeWidth="4" /><path d="M2.500 2l7 8M9.500 2l-7 8" stroke="#fff" strokeWidth="2.400" /></svg></button>
        </div>
      </header>

      <div className="h-14 shrink-0 flex bg-[#9cdbda] border-t-2 border-[#4e6e72]">
        <nav className={`flex-1 flex items-center gap-[18px] pl-[14px] pr-3 pb-1 ${SERIF} font-bold text-[14px] ${RAISED}`}>
          {MENU.map(([t, u]) => <button type="button" key={t}>{u < 0 ? t : <Mnemonic text={t} at={u} />}</button>)}
          <button type="button" className="ml-auto">Help</button>
        </nav>
        <div className={`w-[414px] flex items-center pl-1 ${RAISED} border-l-4 border-l-[#51807f]`}>
          <Frontline />
          <div className={`flex-1 flex flex-col items-center pb-1 ${SERIF} font-bold`}>
            <span className="text-[24px] leading-[28px] whitespace-nowrap">Genesis 2000</span>
            <span className="italic text-[14px] leading-[18px]">Graphic Editor</span>
          </div>
          <p className={`self-start pt-[2px] w-[102px] text-center italic font-bold ${MONO} text-[15px] leading-[15px] whitespace-nowrap`}>06 Aug 2019<br />04:21 PM</p>
        </div>
      </div>

      <div className="flex-1 min-h-0 flex">
        <LeftPanel />
        <Board />
        <aside className="w-[163px] shrink-0 flex flex-col justify-end border-l border-[#2c6e5e] pb-px">
          <p className={`h-[46px] pl-px pt-[7px] bg-[#55cdb0] ${MONO} text-[15px] font-bold leading-[15px] ${G_RAISED}`}>X = 3.177847"<br />Y = 2.733339"</p>
        </aside>
      </div>

      <div className={`h-[33px] shrink-0 flex bg-[#ffffcc] border-b-2 border-black ${MONO}`}>
        <ToolBtn label="Measure distance"><path d="M4 4l12 12M4 8V4h4M12 16h4v-4" /></ToolBtn>
        <ToolBtn label="Measure angle"><path d="M4 16h12M4 16L16 4M7 4v4M11 11q3 1 3 5" /></ToolBtn>
        <ToolBtn label="Snap to grid" on><path d="M4 16V9l5-5h7v12zM4 10h12M10 4v12" /></ToolBtn>
        <label htmlFor="xy" className="w-[48px] shrink-0 flex items-center pl-[2px] text-[12px] font-bold whitespace-nowrap border-r border-[#55cdb0]">X Y :</label>
        <div className="flex-1 flex items-center pl-1 border-2 border-[#b8b48c] border-r-0 border-b-[#ffffe8]">
          <IBeam /><input id="xy" className="flex-1 bg-transparent outline-none" />
        </div>
        <div className="w-20 pt-[3px] pb-px pl-[3px] pr-[2px] flex bg-[#55cdb0] border-l-2 border-black text-[15px]">
          <Drop label="Units" value="Inch" tone="bg-[#55cdb0]" className="flex-1" pad="pl-1" />
        </div>
      </div>
      <div className="h-[33px] shrink-0 p-[2px] bg-[#6b8f90]"><div className="h-full bg-[#b3ffff] border-2 border-[#e0ffff] border-b-[#5c9c9c] border-r-[#5c9c9c]" /></div>

      <Taskbar />

      <ResultsViewer />
      <Checklist />
      <Histogram />
    </div>
  );
}
